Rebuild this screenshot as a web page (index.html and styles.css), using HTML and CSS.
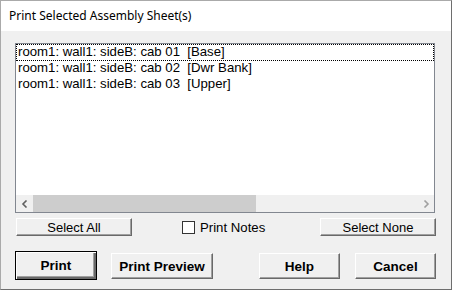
FILE: index.html
```html
<!DOCTYPE html>
<html lang="en">
<head>
    <meta charset="UTF-8">
    <title>Print Selected Assembly Sheet(s)</title>
    <link rel="stylesheet" href="styles.css">
</head>
<body>
    <div class="window">
        <div class="titlebar">Print Selected Assembly Sheet(s)</div>
        <div class="client">
            <div class="listbox">
                <div class="items">
                    <div class="item focused">room1: wall1: sideB: cab 01&nbsp;&nbsp;[Base]</div>
                    <div class="item">room1: wall1: sideB: cab 02&nbsp;&nbsp;[Dwr Bank]</div>
                    <div class="item">room1: wall1: sideB: cab 03&nbsp;&nbsp;[Upper]</div>
                </div>
                <div class="hscroll">
                    <div class="arrow">
                        <svg width="8" height="8" viewBox="0 0 8 8"><path d="M5.5 0.5 L2 4 L5.5 7.5" fill="none" stroke="#606060" stroke-width="1.6"/></svg>
                    </div>
                    <div class="track"><div class="thumb"></div></div>
                    <div class="arrow">
                        <svg width="8" height="8" viewBox="0 0 8 8"><path d="M2.5 0.5 L6 4 L2.5 7.5" fill="none" stroke="#a0a0a0" stroke-width="1.6"/></svg>
                    </div>
                </div>
            </div>
            <div class="select-row">
                <button class="btn small">Select All</button>
                <label class="check"><span class="box"></span>Print Notes</label>
                <button class="btn small">Select None</button>
            </div>
            <div class="action-row">
                <button class="btn big default">Print</button>
                <button class="btn big preview">Print Preview</button>
                <button class="btn big help">Help</button>
                <button class="btn big cancel">Cancel</button>
            </div>
        </div>
    </div>
</body>
</html>
```

FILE: styles.css
```css
body {
    margin: 0;
    padding: 0;
    background: #f0f0f0;
}
.window {
    width: 452px;
    height: 290px;
    box-sizing: border-box;
    border: 1px solid #aaa;
    border-right-color: #6e6e6e;
    border-bottom-color: #6e6e6e;
    background: #f0f0f0;
    display: flex;
    flex-direction: column;
    font-family: "Liberation Sans", Arial, sans-serif;
    font-size: 13.2px;
    color: #000;
}
.titlebar {
    height: 30px;
    line-height: 29px;
    padding-left: 8px;
    background: #fff;
    font-family: "Noto Sans", "Open Sans", sans-serif;
    font-size: 12px;
}
.client {
    padding: 12px 0 0 14px;
}
.listbox {
    width: 420px;
    height: 170px;
    box-sizing: border-box;
    border: 1px solid #828790;
    background: #fff;
    display: flex;
    flex-direction: column;
}
.items {
    flex: 1;
}
.item {
    height: 16px;
    line-height: 16px;
    padding-left: 2px;
    white-space: nowrap;
    box-sizing: border-box;
}
.item.focused {
    outline: 1px dotted #000;
    outline-offset: -1px;
    height: 17px;
    margin-bottom: -1px;
}
.hscroll {
    height: 17px;
    display: flex;
    background: #f0f0f0;
}
.arrow {
    width: 17px;
    display: flex;
    align-items: center;
    justify-content: center;
}
.track {
    flex: 1;
}
.thumb {
    width: 223px;
    height: 17px;
    background: #cdcdcd;
}
.btn {
    font-family: "Liberation Sans", Arial, sans-serif;
    font-size: 13px;
    color: #000;
    background: #f0f0f0;
    border: 1px solid;
    border-color: #fff #696969 #696969 #fff;
    box-shadow: inset -1px -1px #a0a0a0;
    padding: 0;
    margin: 0;
}
.select-row {
    display: flex;
    align-items: center;
    width: 421px;
    margin-top: 5px;
    height: 18px;
}
.btn.small {
    width: 116px;
    height: 18px;
    line-height: 15px;
}
.select-row .btn:first-child {
    margin-left: 1px;
}
.check {
    display: flex;
    align-items: center;
    margin-left: 50px;
    flex: 1;
}
.box {
    width: 11px;
    height: 11px;
    border: 1px solid #333;
    background: #fff;
    margin-right: 5px;
}
.action-row {
    display: flex;
    align-items: flex-start;
    margin-top: 15px;
}
.btn.big {
    height: 26px;
    font-size: 13.5px;
    font-weight: bold;
    margin-top: 2px;
}
.btn.default {
    width: 82px;
    height: 29px;
    margin-top: 0;
    border: 1px solid #000;
    box-shadow: inset 1px 1px #fff, inset -2px -2px #696969, inset -3px -3px #a0a0a0;
}
.btn.preview {
    width: 102px;
    margin-left: 14px;
}
.btn.help {
    width: 81px;
    margin-left: 46px;
}
.btn.cancel {
    width: 81px;
    margin-left: 15px;
}
```
